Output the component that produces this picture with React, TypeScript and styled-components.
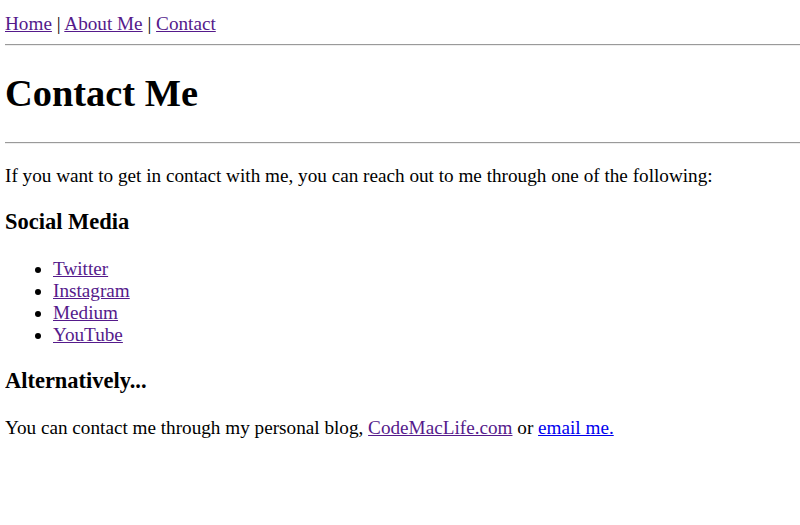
import React from "react";
import styled, { createGlobalStyle } from "styled-components";

const Global = createGlobalStyle`
  html, body { background: #ffffff; }
  body {
    margin: 12px 0 12px 5px;
    font-family: "Liberation Serif", "Times New Roman", serif;
    font-size: 19.2px;
    color: #000000;
  }
`;

const Page = styled.main`
  display: block;
`;

const Nav = styled.nav`
  display: block;
  line-height: normal;
  padding-top: 1px;
  margin-bottom: -1px;
`;

const Link = styled.a<{ $visited?: boolean }>`
  color: ${(p) => (p.$visited ? "#551a8b" : "#0000ee")};
  text-decoration: underline;
  cursor: pointer;
`;

const Rule = styled.hr`
  margin: 9.6px 0;
  border: none;
  border-top: 1px solid #9a9a9a;
  border-bottom: 1px solid #eeeeee;
  height: 0;
`;

const Title = styled.h1`
  font-size: 2em;
  font-weight: bold;
  margin: 0.67em 0 26.7px;
`;

const Para = styled.p<{ $top?: number }>`
  margin: ${(p) => (p.$top ? `${p.$top}px` : "1em")} 0 1em;
`;

const SectionTitle = styled.h3`
  font-size: 1.17em;
  font-weight: bold;
  margin: 1em 0;
`;

const List = styled.ul`
  margin: 18px 0 1em;
  padding-left: 48px;
  list-style: disc;
`;

const Item = styled.li`
  line-height: normal;
`;

const socials = ["Twitter", "Instagram", "Medium", "YouTube"];

export default function App() {
  return (
    <>
      <Global />
      <Page>
        <Nav>
          <Link $visited href="#">Home</Link> | <Link $visited href="#">About Me</Link> |{" "}
          <Link $visited href="#">Contact</Link>
        </Nav>
        <Rule />
        <Title>Contact Me</Title>
        <Rule />
        <Para $top={21}>
          If you want to get in contact with me, you can reach out to me through one of the following:
        </Para>
        <SectionTitle>Social Media</SectionTitle>
        <List>
          {socials.map((s) => (
            <Item key={s}>
              <Link $visited href="#">{s}</Link>
            </Item>
          ))}
        </List>
        <SectionTitle>Alternatively...</SectionTitle>
        <Para $top={22.5}>
          You can contact me through my personal blog, <Link $visited href="#">CodeMacLife.com</Link> or{" "}
          <Link href="#">email me.</Link>
        </Para>
      </Page>
    </>
  );
}
